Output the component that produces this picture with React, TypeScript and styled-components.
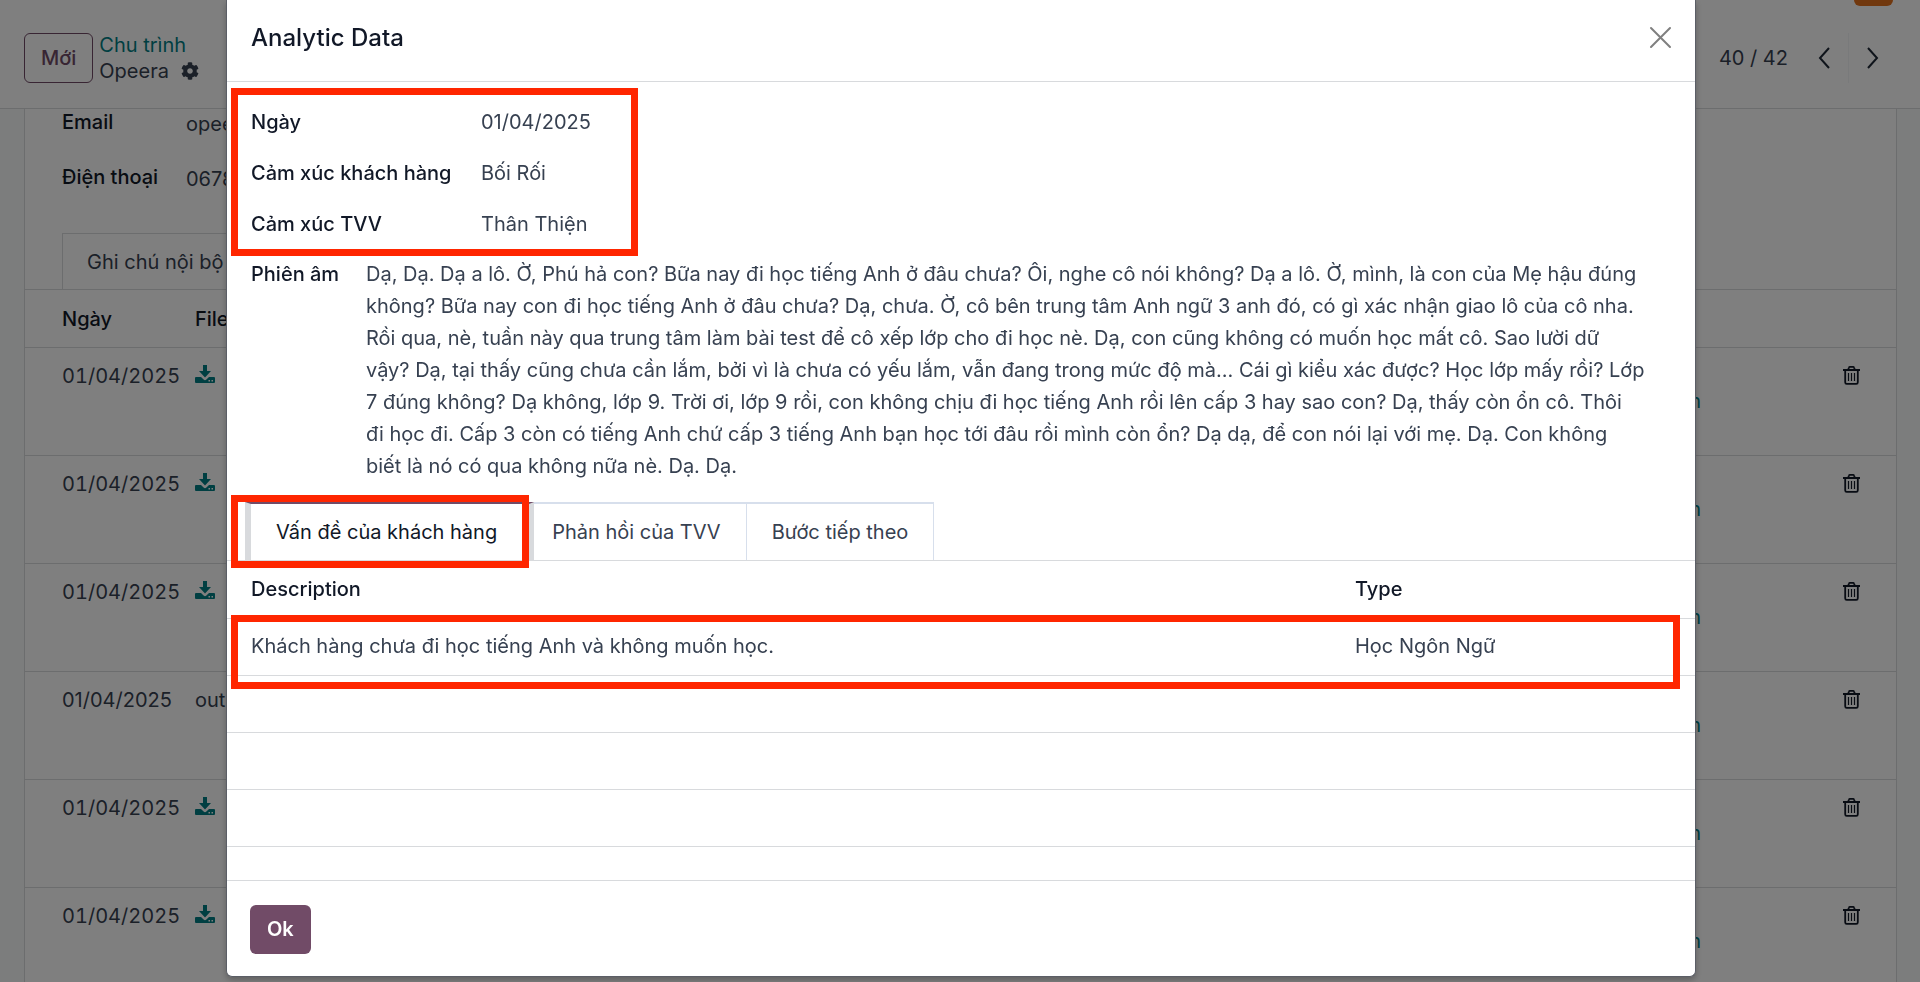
import React from "react";
import styled, { createGlobalStyle, css } from "styled-components";
import { FaCog } from "react-icons/fa";

const GlobalStyle = createGlobalStyle`
  *, *::before, *::after { box-sizing: border-box; }
  body {
    margin: 0;
    overflow: hidden;
    font-family: Inter, "Noto Sans", "Liberation Sans", sans-serif;
    font-size: 20px;
    line-height: 26px;
    color: #374151;
    background: #f9fafb;
  }
  button { font: inherit; cursor: pointer; }
  a { color: #017e84; text-decoration: none; }
`;

const line = "#d8dadd";
const ink = "#111827";

/* ---------- record page behind the dialog ---------- */

const Page = styled.div`
  display: flex;
  flex-direction: column;
  height: 100vh;
  overflow: hidden;
`;

const ControlPanel = styled.header`
  position: relative;
  flex: none;
  display: flex;
  align-items: center;
  height: 109px;
  padding: 8px 23px 0 24px;
  background: #fff;
  border-bottom: 1px solid ${line};
`;

const Avatar = styled.div`
  position: absolute;
  top: 0;
  right: 27px;
  width: 39px;
  height: 6px;
  border-radius: 0 0 6px 6px;
  background: #e2711d;
`;

const NewButton = styled.button`
  height: 50px;
  padding: 0 16px;
  border: 1px solid #714b67;
  border-radius: 6px;
  background: transparent;
  color: #714b67;
  font-weight: 500;
`;

const Breadcrumb = styled.nav`
  display: flex;
  flex-direction: column;
  margin-left: 6px;
`;

const Current = styled.span`
  display: flex;
  align-items: center;
  gap: 12px;
  svg { width: 18px; height: 18px; }
`;

const Pager = styled.div`
  display: flex;
  align-items: center;
  margin-left: auto;
`;

const PagerCount = styled.span`
  margin-right: 11px;
`;

const PagerButton = styled.button`
  display: grid;
  place-items: center;
  width: 49px;
  height: 50px;
  padding: 0;
  border: 0;
  background: #fff;
  color: #1f2937;
  & + & { border-left: 1px solid #f3f4f6; }
`;

const Sheet = styled.main`
  flex: 1;
  margin: 0 23px 0 24px;
  border: solid ${line};
  border-width: 0 1px;
  background: #fff;
`;

const RecordFields = styled.dl`
  display: grid;
  grid-template-columns: 124px 1fr;
  grid-auto-rows: 55px;
  margin: 0;
  padding: 0 37px 14px;
  dt { color: ${ink}; font-weight: 500; }
  dd { margin: 2px 0 0; }
`;

const SheetTabs = styled.div`
  display: flex;
  padding-left: 37px;
  border-bottom: 1px solid ${line};
`;

const SheetTab = styled.button`
  height: 56px;
  padding: 0 24px;
  border: solid ${line};
  border-width: 1px 1px 0;
  background: none;
  color: inherit;
`;

const FileTable = styled.table`
  width: 100%;
  border-collapse: collapse;
  table-layout: fixed;
  th, td { padding: 0; text-align: left; vertical-align: top; border-bottom: 1px solid ${line}; }
  th { height: 57px; padding-top: 16px; color: ${ink}; font-weight: 500; }
  td { height: 108px; padding-top: 15px; }
  th:first-child, td:first-child { width: 170px; padding-left: 37px; }
  td:nth-child(3) { width: 200px; padding-top: 40px; text-align: right; }
  th:last-child, td:last-child { width: 195px; }
`;

const DateCell = styled.td<{ $tabular: boolean }>`
  font-variant-numeric: ${(p) => (p.$tabular ? "tabular-nums" : "normal")};
`;

const IconButton = styled.button`
  display: block;
  padding: 0;
  border: 0;
  background: none;
  color: ${ink};
  svg { display: block; }
`;

const DeleteButton = styled(IconButton)`
  margin: 3px 0 0 142px;
`;

const DownloadLink = styled.a`
  display: block;
  width: 20px;
  margin-top: 2px;
  svg { display: block; }
`;

/* ---------- dialog ---------- */

const Backdrop = styled.div`
  position: fixed;
  inset: 0;
  padding: 0 224px 0 226px;
  background: rgba(0, 0, 0, 0.5);
`;

const Dialog = styled.section`
  border: solid #5b5e66;
  border-width: 0 1px 1px;
  border-radius: 0 0 6px 6px;
  background: #fff;
  box-shadow: 0 3px 6px rgba(0, 0, 0, 0.25);
`;

const DialogHeader = styled.header`
  display: flex;
  align-items: center;
  justify-content: space-between;
  height: 82px;
  padding: 0 23px 6px 24px;
  border-bottom: 1px solid ${line};
`;

const Title = styled.h1`
  margin: 0;
  color: ${ink};
  font-size: 24px;
  line-height: 32px;
  font-weight: 500;
`;

const CloseButton = styled(IconButton)`
  color: #7f7f7f;
`;

const Highlight = styled.div<{ $inset: string }>`
  position: absolute;
  inset: ${(p) => p.$inset};
  border: 7px solid #ff2600;
  pointer-events: none;
  z-index: 1;
`;

const Insights = styled.dl`
  position: relative;
  display: grid;
  grid-template-columns: 230px 137px;
  grid-auto-rows: 51px;
  align-items: center;
  width: fit-content;
  margin: 14px 24px 0;
  dt { color: ${ink}; font-weight: 500; white-space: nowrap; }
  dd { margin: 0; }
`;

const Transcript = styled.dl`
  display: grid;
  grid-template-columns: 115px 1fr;
  margin: 0 0 0 24px;
  padding: 9px 0 20px;
  line-height: 32px;
  dt { color: ${ink}; font-weight: 500; }
  dd { margin: 0; white-space: pre; }
`;

const Tabs = styled.div`
  position: relative;
  display: flex;
  height: 59px;
  padding-left: 18px;
  border-bottom: 1px solid ${line};
`;

const Tab = styled.button<{ $active?: boolean }>`
  padding: 0 25px;
  border: solid #d7dfec;
  border-width: 2px 1px 0 0;
  background: #fff;
  color: inherit;
  white-space: nowrap;
  ${(p) =>
    p.$active &&
    css`
      padding-right: 32px;
      border-color: #714b67 ${line} transparent ${line};
      border-width: 2px 5px 0 6px;
      color: ${ink};
    `}
`;

const TabWrap = styled.div`
  position: relative;
  z-index: 1;
  display: flex;
  margin-right: -7px;
`;

const IssueTable = styled.table`
  width: 100%;
  border-collapse: collapse;
  table-layout: fixed;
  th, td { height: 57px; padding: 0 0 1px; text-align: left; border-bottom: 1px solid ${line}; }
  th { color: ${ink}; font-weight: 500; }
  th:first-child, td:first-child { padding-left: 24px; }
  th:last-child { width: 340px; }
`;

const TableWrap = styled.div`
  position: relative;
  padding-bottom: 33px;
`;

const DialogFooter = styled.footer`
  padding: 24px 23px 22px;
  border-top: 1px solid ${line};
`;

const OkButton = styled.button`
  display: block;
  height: 49px;
  padding: 0 17px;
  border: 0;
  border-radius: 6px;
  background: #714b67;
  color: #fff;
  font-weight: 600;
`;

const Chevron = ({ d }: { d: string }) => (
  <svg width="12" height="22" viewBox="0 0 12 22" fill="none" stroke="currentColor" strokeWidth="2" aria-hidden="true">
    <path d={d} />
  </svg>
);

const CloseIcon = () => (
  <svg width="23" height="23" viewBox="0 0 23 23" stroke="currentColor" strokeWidth="2" strokeLinecap="round" aria-hidden="true">
    <path d="M2 2 21 21M21 2 2 21" />
  </svg>
);

const DownloadIcon = () => (
  <svg width="20" height="19" viewBox="0 0 20 19" fill="currentColor" aria-hidden="true">
    <path d="M8 0h4v6h4l-6 6.400-6-6.400h4z" />
    <path fillRule="evenodd" d="M1 12h5l2.600 2.600a2 2 0 0 0 2.800 0L14 12h5a1 1 0 0 1 1 1v4a1 1 0 0 1-1 1H1a1 1 0 0 1-1-1v-4a1 1 0 0 1 1-1zm12.500 3v1.500H15V15zm3 0v1.500H18V15z" />
  </svg>
);

const TrashIcon = () => (
  <svg width="17" height="19" viewBox="0 0 17 19" fill="none" stroke="currentColor" strokeWidth="1.800" aria-hidden="true">
    <path d="M0 4h17M5 4l1-2.500q.2-.6.900-.6h3.200q.7 0 .9.600L12 4M2.200 4v12.200q0 1.600 1.500 1.600h9.600q1.500 0 1.500-1.600V4" />
    <path d="M5.500 7v8M8.500 7v8M11.500 7v8" strokeWidth="1.200" />
  </svg>
);

const files = [true, true, true, false, true, true];

const transcript = `Dạ, Dạ. Dạ a lô. Ờ, Phú hả con? Bữa nay đi học tiếng Anh ở đâu chưa? Ôi, nghe cô nói không? Dạ a lô. Ờ, mình, là con của Mẹ hậu đúng
không? Bữa nay con đi học tiếng Anh ở đâu chưa? Dạ, chưa. Ờ, cô bên trung tâm Anh ngữ 3 anh đó, có gì xác nhận giao lô của cô nha.
Rồi qua, nè, tuần này qua trung tâm làm bài test để cô xếp lớp cho đi học nè. Dạ, con cũng không có muốn học mất cô. Sao lười dữ
vậy? Dạ, tại thấy cũng chưa cần lắm, bởi vì là chưa có yếu lắm, vẫn đang trong mức độ mà... Cái gì kiểu xác được? Học lớp mấy rồi? Lớp
7 đúng không? Dạ không, lớp 9. Trời ơi, lớp 9 rồi, con không chịu đi học tiếng Anh rồi lên cấp 3 hay sao con? Dạ, thấy còn ổn cô. Thôi
đi học đi. Cấp 3 còn có tiếng Anh chứ cấp 3 tiếng Anh bạn học tới đâu rồi mình còn ổn? Dạ dạ, để con nói lại với mẹ. Dạ. Con không
biết là nó có qua không nữa nè. Dạ. Dạ.`;

export default function App() {
  return (
    <>
      <GlobalStyle />
      <Page>
        <ControlPanel>
          <Avatar />
          <NewButton>Mới</NewButton>
          <Breadcrumb>
            <a href="#pipeline">Chu trình</a>
            <Current>
              Opeera <FaCog aria-hidden="true" />
            </Current>
          </Breadcrumb>
          <Pager>
            <PagerCount>40 / 42</PagerCount>
            <PagerButton aria-label="Previous"><Chevron d="M11 1 2 11l9 10" /></PagerButton>
            <PagerButton aria-label="Next"><Chevron d="M1 1l9 10-9 10" /></PagerButton>
          </Pager>
        </ControlPanel>
        <Sheet>
          <RecordFields>
            <dt>Email</dt>
            <dd>opee</dd>
            <dt>Điện thoại</dt>
            <dd>0678</dd>
          </RecordFields>
          <SheetTabs>
            <SheetTab>Ghi chú nội bộ</SheetTab>
          </SheetTabs>
          <FileTable>
            <thead>
              <tr>
                <th>Ngày</th>
                <th>File</th>
                <th />
                <th />
              </tr>
            </thead>
            <tbody>
              {files.map((downloadable, i) => (
                <tr key={i}>
                  <DateCell $tabular={downloadable}>01/04/2025</DateCell>
                  <td>
                    {downloadable ? (
                      <DownloadLink href="#download" aria-label="Download"><DownloadIcon /></DownloadLink>
                    ) : (
                      "out"
                    )}
                  </td>
                  <td><a href="#detail">n</a></td>
                  <td>
                    <DeleteButton aria-label="Delete"><TrashIcon /></DeleteButton>
                  </td>
                </tr>
              ))}
            </tbody>
          </FileTable>
        </Sheet>
      </Page>

      <Backdrop>
        <Dialog role="dialog" aria-labelledby="dialog-title">
          <DialogHeader>
            <Title id="dialog-title">Analytic Data</Title>
            <CloseButton aria-label="Close"><CloseIcon /></CloseButton>
          </DialogHeader>

          <Insights>
            <dt>Ngày</dt>
            <dd>01/04/2025</dd>
            <dt>Cảm xúc khách hàng</dt>
            <dd>Bối Rối</dd>
            <dt>Cảm xúc TVV</dt>
            <dd>Thân Thiện</dd>
            <Highlight $inset="-8px -20px -7px" />
          </Insights>

          <Transcript>
            <dt>Phiên âm</dt>
            <dd>{transcript}</dd>
          </Transcript>

          <Tabs role="tablist">
            <TabWrap>
              <Tab role="tab" aria-selected="true" $active>Vấn đề của khách hàng</Tab>
              <Highlight $inset="-7px 5px -8px -14px" />
            </TabWrap>
            <Tab role="tab">Phản hồi của TVV</Tab>
            <Tab role="tab">Bước tiếp theo</Tab>
          </Tabs>

          <TableWrap>
            <IssueTable>
              <thead>
                <tr>
                  <th>Description</th>
                  <th>Type</th>
                </tr>
              </thead>
              <tbody>
                <tr>
                  <td>Khách hàng chưa đi học tiếng Anh và không muốn học.</td>
                  <td>Học Ngôn Ngữ</td>
                </tr>
                {[0, 1, 2].map((i) => (
                  <tr key={i}>
                    <td colSpan={2} />
                  </tr>
                ))}
              </tbody>
            </IssueTable>
            <Highlight $inset="54px 15px 191px 4px" />
          </TableWrap>

          <DialogFooter>
            <OkButton>Ok</OkButton>
          </DialogFooter>
        </Dialog>
      </Backdrop>
    </>
  );
}
